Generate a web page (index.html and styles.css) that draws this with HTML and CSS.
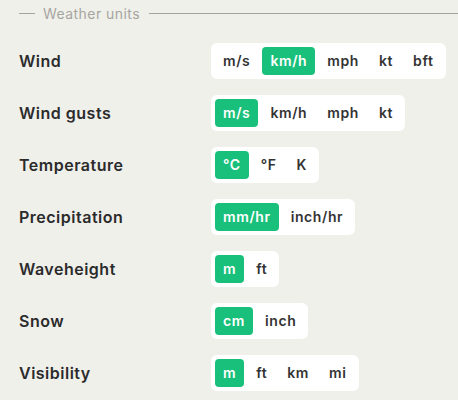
FILE: index.html
```html
<!DOCTYPE html>
<html>
<head>
<meta charset="utf-8">
<link rel="stylesheet" href="styles.css">
</head>
<body>
<section class="panel">
  <div class="legend">
    <span class="rule rule-short"></span>
    <span class="legend-text">Weather units</span>
    <span class="rule rule-long"></span>
  </div>
  <div class="rows">
    <div class="label">Wind</div>
    <div class="seg"><span class="opt">m/s</span><span class="opt on">km/h</span><span class="opt">mph</span><span class="opt">kt</span><span class="opt">bft</span></div>
    <div class="label">Wind gusts</div>
    <div class="seg"><span class="opt on">m/s</span><span class="opt">km/h</span><span class="opt">mph</span><span class="opt">kt</span></div>
    <div class="label">Temperature</div>
    <div class="seg"><span class="opt on">°C</span><span class="opt">°F</span><span class="opt">K</span></div>
    <div class="label">Precipitation</div>
    <div class="seg"><span class="opt on">mm/hr</span><span class="opt">inch/hr</span></div>
    <div class="label">Waveheight</div>
    <div class="seg"><span class="opt on">m</span><span class="opt">ft</span></div>
    <div class="label">Snow</div>
    <div class="seg"><span class="opt on">cm</span><span class="opt">inch</span></div>
    <div class="label">Visibility</div>
    <div class="seg"><span class="opt on">m</span><span class="opt">ft</span><span class="opt">km</span><span class="opt">mi</span></div>
  </div>
</section>
</body>
</html>
```
FILE: styles.css
```css
html, body {
  margin: 0;
  padding: 0;
  background: #f0f0eb;
}
body {
  font-family: Inter, "Noto Sans", sans-serif;
  color: #2b2b2b;
  width: 458px;
  height: 400px;
  overflow: hidden;
}
.panel {
  padding-left: 19px;
}
.legend {
  display: flex;
  align-items: center;
  height: 26px;
}
.rule {
  height: 1px;
  background: #a3a39d;
}
.rule-short {
  width: 16px;
}
.rule-long {
  flex: 1;
}
.legend-text {
  font-size: 14px;
  letter-spacing: 0.45px;
  color: #a6a6a0;
  padding: 0 9px 0 8px;
}
.rows {
  margin-top: 17px;
  display: grid;
  grid-template-columns: 192px auto;
  grid-auto-rows: 36px;
  row-gap: 16px;
  align-items: center;
  justify-items: start;
}
.label {
  font-size: 16px;
  font-weight: 600;
  letter-spacing: 0.5px;
  color: #2b2b2b;
}
.seg {
  display: inline-flex;
  gap: 4px;
  padding: 4px;
  background: #ffffff;
  border-radius: 6px;
}
.opt {
  height: 28px;
  line-height: 28px;
  padding: 0 8px;
  border-radius: 4px;
  font-size: 14px;
  font-weight: 600;
  letter-spacing: 0.6px;
  color: #333333;
}
.opt.on {
  background: #19c07b;
  color: #ffffff;
}
```
